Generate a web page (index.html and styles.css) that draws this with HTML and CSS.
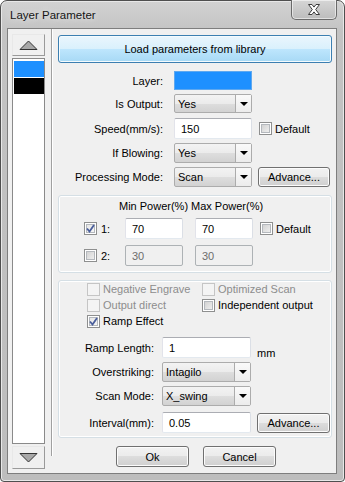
FILE: index.html
```html
<!DOCTYPE html>
<html>
<head>
<title>Layer Parameter</title>
<meta charset="utf-8">
<link rel="stylesheet" href="styles.css">
</head>
<body>
<div class="window">
  <div class="titlebar">
    <span class="title">Layer Parameter</span>
    <div class="close">
      <svg width="14" height="11" viewBox="0 0 14 11"><path d="M1.5 0.5h3.5l2 2.6l2-2.6h3.5l-3.8 5l3.8 5h-3.5l-2-2.6l-2 2.6h-3.5l3.8-5z" fill="#fff" stroke="#3d3d3d" stroke-width="1"/></svg>
    </div>
  </div>
  <div class="client">
    <div class="side">
      <div class="sbtn">
        <svg width="19" height="10" viewBox="0 0 19 10"><path d="M1 9.5L9.5 1L18 9.5z" fill="#a8a8a8" stroke="#333" stroke-width="1"/></svg>
      </div>
      <div class="layers">
        <div class="layer blue"></div>
        <div class="layer black"></div>
      </div>
      <div class="sbtn">
        <svg width="19" height="10" viewBox="0 0 19 10"><path d="M1 0.5L9.5 9L18 0.5z" fill="#a8a8a8" stroke="#333" stroke-width="1"/></svg>
      </div>
    </div>
    <div class="divider"></div>
    <div class="main">
      <div class="btn load">Load parameters from library</div>

      <div class="row r-layer">
        <span class="lbl">Layer:</span>
        <div class="swatch"></div>
      </div>
      <div class="row r-out">
        <span class="lbl">Is Output:</span>
        <div class="combo"><span class="val">Yes</span><span class="drop"></span></div>
      </div>
      <div class="row r-speed">
        <span class="lbl">Speed(mm/s):</span>
        <div class="edit">150</div>
        <span class="chk dflt"></span><span class="chktext">Default</span>
      </div>
      <div class="row r-blow">
        <span class="lbl">If Blowing:</span>
        <div class="combo"><span class="val">Yes</span><span class="drop"></span></div>
      </div>
      <div class="row r-mode">
        <span class="lbl">Processing Mode:</span>
        <div class="combo"><span class="val">Scan</span><span class="drop"></span></div>
        <div class="btn adv">Advance...</div>
      </div>

      <div class="group g-power">
        <div class="phead"><span class="pmin">Min Power(%)</span><span>Max Power(%)</span></div>
        <div class="prow p1">
          <span class="chk on"><svg width="9" height="9" viewBox="0 0 9 9"><path d="M1 4.5L3.5 7.5L8 1" fill="none" stroke="#4a5e9b" stroke-width="1.8"/></svg></span>
          <span class="num">1:</span>
          <div class="edit pin">70</div>
          <div class="edit pin">70</div>
          <span class="chk dflt"></span><span class="chktext">Default</span>
        </div>
        <div class="prow p2">
          <span class="chk"></span>
          <span class="num">2:</span>
          <div class="edit pin off">30</div>
          <div class="edit pin off">30</div>
        </div>
      </div>

      <div class="group g-scan">
        <div class="crow">
          <div class="citem c1"><span class="chk dis"></span><span class="dtext">Negative Engrave</span></div>
          <div class="citem"><span class="chk dis"></span><span class="dtext">Optimized Scan</span></div>
        </div>
        <div class="crow">
          <div class="citem c1"><span class="chk dis"></span><span class="dtext">Output direct</span></div>
          <div class="citem"><span class="chk"></span><span class="chktext">Independent output</span></div>
        </div>
        <div class="crow">
          <div class="citem c1"><span class="chk on"><svg width="9" height="9" viewBox="0 0 9 9"><path d="M1 4.5L3.5 7.5L8 1" fill="none" stroke="#4a5e9b" stroke-width="1.8"/></svg></span><span class="chktext">Ramp Effect</span></div>
        </div>
        <div class="row s-ramp">
          <span class="slbl">Ramp Length:</span>
          <div class="edit wide">1</div>
          <span class="unit">mm</span>
        </div>
        <div class="row s-over">
          <span class="slbl">Overstriking:</span>
          <div class="combo wide"><span class="val">Intagilo</span><span class="drop"></span></div>
        </div>
        <div class="row s-mode">
          <span class="slbl">Scan Mode:</span>
          <div class="combo wide"><span class="val">X_swing</span><span class="drop"></span></div>
        </div>
        <div class="row s-int">
          <span class="slbl">Interval(mm):</span>
          <div class="edit wide">0.05</div>
          <div class="btn adv adv2">Advance...</div>
        </div>
      </div>

      <div class="actions">
        <div class="btn act">Ok</div>
        <div class="btn act">Cancel</div>
      </div>
    </div>
  </div>
</div>
</body>
</html>
```
FILE: styles.css
```css
body {
    margin: 0;
    font-family: "Liberation Sans", Arial, sans-serif;
    font-size: 11px;
    color: #000;
    background: #fff;
}
.window {
    width: 345px;
    height: 482px;
    box-sizing: border-box;
    border: 1px solid #4f4f4f;
    border-radius: 7px 7px 4px 4px;
    background: linear-gradient(#d2d2d2, #c3c3c3 30px, #bdbdbd);
    box-shadow: inset 0 0 0 1px #e8e8e8;
    display: flex;
    flex-direction: column;
}
.titlebar {
    height: 27px;
    display: flex;
    align-items: flex-start;
}
.title {
    margin: 8px 0 0 9px;
    font-size: 11.5px;
    line-height: 13px;
    color: #151515;
    text-shadow: 0 0 6px #eee;
}
.close {
    margin: -1px 7px 0 auto;
    width: 46px;
    height: 20px;
    box-sizing: border-box;
    border: 1px solid #6a6a6a;
    border-top: none;
    border-radius: 0 0 5px 5px;
    background: linear-gradient(#d6d6d6, #bcbcbc);
    box-shadow: inset 0 0 0 1px rgba(255,255,255,0.55);
    display: flex;
    align-items: center;
    justify-content: center;
}
.client {
    margin-left: 6px;
    width: 330px;
    height: 446px;
    box-sizing: border-box;
    border: 1px solid #7e7e7e;
    background: #f0f0f0;
    display: flex;
    padding: 5px 0 0 4px;
}

/* layer list */
.side {
    width: 33px;
    display: flex;
    flex-direction: column;
}
.sbtn {
    height: 22px;
    box-sizing: border-box;
    border: 1px solid;
    border-color: #e8e8e8 #9a9a9a #9a9a9a #e8e8e8;
    background: #f0f0f0;
    display: flex;
    align-items: center;
    justify-content: center;
}
.sbtn + .layers { margin-top: 2px; }
.layers + .sbtn { margin-top: 2px; height: 23px; }
.layers {
    height: 386px;
    box-sizing: border-box;
    border: 1px solid #8a8a8a;
    background: #fff;
    padding: 2px 0 0 1px;
}
.layer {
    width: 30px;
    height: 16px;
    margin-bottom: 1px;
}
.blue { background: #1e90ff; }
.black { background: #000; }
.divider {
    margin: -5px 0 0 6px;
    width: 1px;
    height: 427px;
    background: #a0a0a0;
    border-right: 1px solid #fff;
}

.main {
    margin-left: 5px;
    width: 274px;
    display: flex;
    flex-direction: column;
}

/* buttons */
.btn {
    box-sizing: border-box;
    border: 1px solid #707070;
    border-radius: 3px;
    background: linear-gradient(#f2f2f2, #ebebeb 50%, #dddddd 50%, #cfcfcf);
    box-shadow: inset 0 0 0 1px #fcfcfc;
    display: flex;
    align-items: center;
    justify-content: center;
}
.load {
    margin-top: 1px;
    height: 28px;
    border-color: #3c7fb1;
    background: linear-gradient(#eaf6fd, #d9f0fc 50%, #bee6fd 50%, #a7d9f5);
    box-shadow: inset 0 0 0 1px #f4fbfe;
}
.adv {
    width: 72px;
    height: 20px;
    margin-left: 6px;
}
.adv2 { width: 73px; }

/* form rows */
.row {
    display: flex;
    align-items: center;
}
.lbl {
    width: 105px;
    margin-right: 11px;
    text-align: right;
}
.r-layer { margin-top: 8px; height: 19px; }
.r-out { margin-top: 4px; height: 19px; }
.r-speed { margin-top: 5px; height: 21px; }
.r-blow { margin-top: 4px; height: 20px; }
.r-mode { margin-top: 4px; height: 20px; }

.swatch {
    width: 78px;
    height: 19px;
    box-sizing: border-box;
    background: #1e90ff;
    border: 1px solid #5fa8ef;
}
.combo {
    width: 78px;
    height: 100%;
    box-sizing: border-box;
    border: 1px solid #acacac;
    border-radius: 2px;
    background: linear-gradient(#f3f3f3, #ebebeb 50%, #dedede 50%, #d2d2d2);
    display: flex;
}
.combo .val {
    flex: 1;
    padding-left: 3px;
    display: flex;
    align-items: center;
}
.drop {
    width: 15px;
    border-left: 1px solid #acacac;
    background: linear-gradient(#fafafa, #ececec);
    display: flex;
    align-items: center;
    justify-content: center;
}
.drop::after {
    content: "";
    border-left: 4px solid transparent;
    border-right: 4px solid transparent;
    border-top: 4px solid #000;
}
.edit {
    width: 78px;
    height: 100%;
    box-sizing: border-box;
    border: 1px solid;
    border-color: #abadb3 #dbdfe6 #e3e9ef #e2e3ea;
    border-radius: 2px;
    background: #fff;
    padding-left: 6px;
    display: flex;
    align-items: center;
}
.edit.off {
    background: #f0f0f0;
    border-color: #adb2b5;
    color: #6d6d6d;
}

/* checkboxes */
.chk {
    width: 13px;
    height: 13px;
    box-sizing: border-box;
    border: 1px solid #8e8f8f;
    background: linear-gradient(135deg, #cbcbcb, #f6f6f6);
    box-shadow: inset 0 0 0 1px #fff, inset 0 0 0 2px #b4b8bd;
    display: flex;
    align-items: center;
    justify-content: center;
    flex: none;
}
.chk.on {
    background: linear-gradient(135deg, #e2e2e2, #fafafa);
}
.chk.dis {
    border-color: #c5c5c5;
    background: #f4f4f4;
    box-shadow: none;
}
.chk.dflt { margin-left: 7px; }
.chktext { margin-left: 3px; }
.dtext { margin-left: 3px; color: #8d8d8d; }

/* groups */
.group {
    box-sizing: border-box;
    border: 1px solid #d5dfe5;
    border-radius: 3px;
    box-shadow: inset 0 0 0 1px #fff;
}
.g-power { margin-top: 8px; height: 78px; }
.g-scan { margin-top: 7px; height: 158px; }
.phead {
    margin-top: 4px;
    padding-left: 60px;
    line-height: 13px;
    display: flex;
}
.pmin { width: 72px; }
.prow {
    height: 21px;
    padding-left: 25px;
    display: flex;
    align-items: center;
}
.p1 { margin-top: 5px; }
.p2 { margin-top: 6px; }
.num {
    width: 24px;
    margin-left: 4px;
}
.pin { width: 58px; }
.pin + .pin { margin-left: 12px; }

.crow {
    height: 16px;
    padding-left: 28px;
    display: flex;
    align-items: center;
}
.citem {
    display: flex;
    align-items: center;
}
.c1 { width: 115px; }
.slbl {
    width: 95px;
    margin-right: 8px;
    text-align: right;
}
.wide { width: 89px; }
.s-ramp { margin-top: 8px; height: 21px; }
.s-over { margin-top: 4px; height: 20px; }
.s-mode { margin-top: 4px; height: 20px; }
.s-int { margin-top: 6px; height: 21px; }
.unit {
    align-self: flex-end;
    margin: 0 0 -1px 6px;
}

.actions {
    margin-top: 8px;
    padding-left: 58px;
    display: flex;
}
.act {
    width: 73px;
    height: 21px;
}
.act + .act { margin-left: 14px; }
```
